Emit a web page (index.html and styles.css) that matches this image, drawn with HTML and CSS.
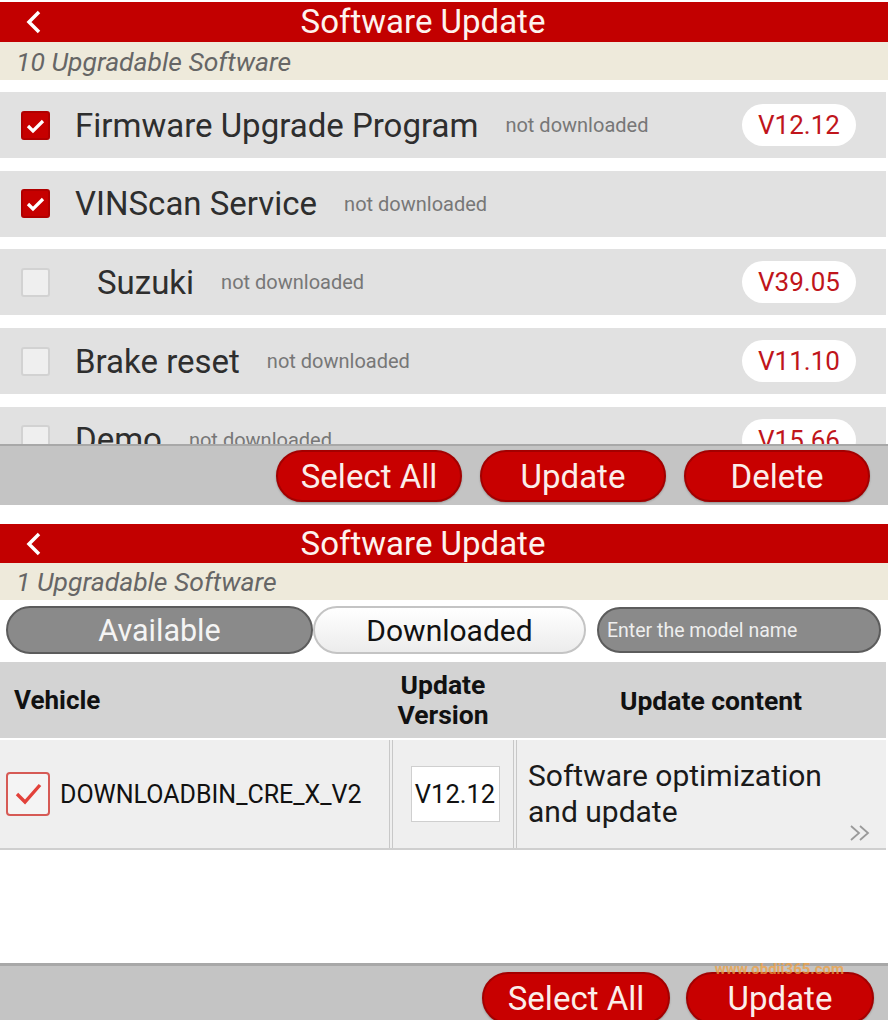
FILE: index.html
```html
<!DOCTYPE html>
<html lang="en">
<head>
  <meta charset="UTF-8">
  <meta name="viewport" content="width=device-width, initial-scale=1.0">
  <title>Software Update</title>
  <link rel="stylesheet" href="styles.css">
</head>
<body>
  <!-- First screen: list of upgradable software -->
  <div class="screen screen-list">
    <header class="titlebar">
      <span class="back">
        <svg width="16" height="24" viewBox="0 0 16 24"><polyline points="13,2 3,12 13,22" fill="none" stroke="#fff" stroke-width="3.5"/></svg>
      </span>
      <h1>Software Update</h1>
    </header>
    <div class="count">10 Upgradable Software</div>

    <div class="list">
      <div class="item">
        <span class="check checked">
          <svg width="29" height="29" viewBox="0 0 29 29"><polyline points="7,15 12,20 22,10" fill="none" stroke="#fff" stroke-width="3.2"/></svg>
        </span>
        <span class="name">Firmware Upgrade Program</span>
        <span class="state">not downloaded</span>
        <span class="version">V12.12</span>
      </div>
      <div class="item">
        <span class="check checked">
          <svg width="29" height="29" viewBox="0 0 29 29"><polyline points="7,15 12,20 22,10" fill="none" stroke="#fff" stroke-width="3.2"/></svg>
        </span>
        <span class="name">VINScan Service</span>
        <span class="state">not downloaded</span>
      </div>
      <div class="item">
        <span class="check"></span>
        <span class="name indent">Suzuki</span>
        <span class="state">not downloaded</span>
        <span class="version">V39.05</span>
      </div>
      <div class="item">
        <span class="check"></span>
        <span class="name">Brake reset</span>
        <span class="state">not downloaded</span>
        <span class="version">V11.10</span>
      </div>
      <div class="item">
        <span class="check"></span>
        <span class="name">Demo</span>
        <span class="state">not downloaded</span>
        <span class="version">V15.66</span>
      </div>
    </div>

    <div class="actions">
      <button class="btn">Select All</button>
      <button class="btn">Update</button>
      <button class="btn">Delete</button>
    </div>
  </div>

  <!-- Second screen: table view -->
  <div class="screen screen-table">
    <header class="titlebar">
      <span class="back">
        <svg width="16" height="24" viewBox="0 0 16 24"><polyline points="13,2 3,12 13,22" fill="none" stroke="#fff" stroke-width="3.5"/></svg>
      </span>
      <h1>Software Update</h1>
    </header>
    <div class="count">1 Upgradable Software</div>

    <div class="tabs">
      <span class="tab active">Available</span>
      <span class="tab">Downloaded</span>
      <span class="search">Enter the model name</span>
    </div>

    <div class="table">
      <div class="thead">
        <div class="th th-vehicle">Vehicle</div>
        <div class="th th-version">Update<br>Version</div>
        <div class="th th-content">Update content</div>
      </div>
      <div class="trow">
        <div class="td td-vehicle">
          <span class="check outline">
            <svg width="40" height="40" viewBox="0 0 40 40"><polyline points="9,20 17,28 32,11" fill="none" stroke="#e2413a" stroke-width="3.4"/></svg>
          </span>
          DOWNLOADBIN_CRE_X_V2
        </div>
        <div class="td td-version"><span class="vbox">V12.12</span></div>
        <div class="td td-content">
          Software optimization<br>and update
          <svg class="more" width="24" height="18" viewBox="0 0 24 18"><polyline points="3,2 11,9 3,16" fill="none" stroke="#9a9a9a" stroke-width="1.8"/><polyline points="12,2 20,9 12,16" fill="none" stroke="#9a9a9a" stroke-width="1.8"/></svg>
        </div>
      </div>
    </div>

    <div class="blank"></div>

    <div class="actions">
      <button class="btn">Select All</button>
      <button class="btn">Update</button>
      <span class="watermark">www.obdii365.com</span>
    </div>
  </div>
</body>
</html>
```

FILE: styles.css
```css
body {
  margin: 0;
  padding: 0;
  width: 888px;
  height: 1020px;
  overflow: hidden;
  background: #fff;
  font-family: Roboto, "Liberation Sans", sans-serif;
}

.screen-list {
  padding-top: 2px;
}

.screen-table {
  margin-top: 19px;
}

/* red title bar */
.titlebar {
  display: flex;
  align-items: center;
  height: 40px;
  background-color: #c20000;
  color: #fff;
  padding-right: 106px;
}

.screen-table .titlebar {
  height: 39px;
}

.back {
  width: 64px;
  display: flex;
  padding-left: 26px;
  box-sizing: border-box;
}

.titlebar h1 {
  flex: 1;
  margin: 0;
  text-align: center;
  font-weight: 400;
  font-size: 33px;
  line-height: 40px;
  color: #fdf3ee;
}

.count {
  height: 38px;
  line-height: 40px;
  background-color: #eeeadb;
  color: #666;
  font-style: italic;
  font-size: 26.5px;
  padding-left: 16px;
}

.screen-table .count {
  height: 37px;
  line-height: 38px;
}

/* list of software */
.list {
  height: 364px;
  overflow: hidden;
  box-sizing: border-box;
  padding: 12px 2px 0 0;
  display: flex;
  flex-direction: column;
  gap: 12.7px;
}

.item {
  flex: none;
  height: 66px;
  display: flex;
  align-items: center;
  background-color: #e1e1e1;
  padding: 0 30px 0 21px;
}

.check {
  flex: none;
  width: 29px;
  height: 29px;
  box-sizing: border-box;
  border: 2px solid #d2d2d2;
  border-radius: 3px;
  background: #efefef;
  display: flex;
}

.check.checked {
  background: #c60000;
  border-color: #b00000;
}

.check.checked svg {
  margin: -2px;
}

.name {
  margin-left: 25px;
  font-size: 33px;
  color: #2e2e2e;
}

.name.indent {
  margin-left: 47px;
}

.state {
  margin-left: 27px;
  font-size: 20px;
  color: #777;
}

.version {
  margin-left: auto;
  width: 114px;
  height: 42px;
  line-height: 42px;
  border-radius: 21px;
  background: #fff;
  color: #c0151b;
  text-align: center;
  font-size: 26px;
}

/* bottom action bar */
.actions {
  position: relative;
  height: 61px;
  box-sizing: border-box;
  background-color: #c4c4c4;
  border-top: 2px solid #a8a8a8;
  display: flex;
  justify-content: flex-end;
  align-items: flex-start;
  gap: 18px;
  padding: 4px 18px 0 0;
}

.btn {
  width: 186px;
  height: 52px;
  border: 2px solid #a30000;
  border-radius: 26px;
  background-color: #c80000;
  color: #fbeeea;
  font-family: Roboto, "Liberation Sans", sans-serif;
  font-size: 33px;
  padding: 0;
  box-shadow: 0 1px 2px rgba(0, 0, 0, 0.25);
}

.screen-table .actions {
  height: 57px;
  border-top-width: 3px;
  padding: 6px 14px 0 0;
  gap: 16px;
}

.screen-table .btn {
  width: 188px;
}

.watermark {
  position: absolute;
  right: 44px;
  top: -6px;
  font-size: 15px;
  font-weight: 700;
  color: #f0a040;
  opacity: 0.75;
}

/* tabs and search */
.tabs {
  height: 60px;
  display: flex;
  align-items: center;
  padding-left: 6px;
}

.tab {
  height: 48px;
  box-sizing: border-box;
  border-radius: 24px;
  display: flex;
  align-items: center;
  justify-content: center;
  font-size: 30px;
}

.tab.active {
  width: 307px;
  background-color: #8a8a8a;
  border: 2px solid #5c5c5c;
  color: #f4f4f4;
  font-size: 30.5px;
}

.tab:not(.active) {
  width: 273px;
  background: linear-gradient(#ffffff, #ececec);
  border: 2px solid #c4c4c4;
  color: #111;
}

.search {
  margin-left: 11px;
  width: 284px;
  height: 46px;
  box-sizing: border-box;
  border-radius: 23px;
  background-color: #8a8a8a;
  border: 2px solid #5c5c5c;
  color: #eee;
  font-size: 19.5px;
  padding-left: 8px;
  display: flex;
  align-items: center;
}

/* table */
.table {
  padding-top: 2px;
  padding-right: 2px;
}

.thead {
  display: grid;
  grid-template-columns: 390px 124px 1fr;
  height: 76px;
  background-color: #d3d3d3;
  align-items: center;
}

.th {
  font-weight: 700;
  font-size: 26.5px;
  color: #111;
}

.th-vehicle {
  padding-left: 14px;
  font-size: 26px;
}

.th-version {
  text-align: center;
  line-height: 30px;
  padding-right: 18px;
}

.th-content {
  text-align: center;
  padding-left: 22px;
}

.trow {
  margin-top: 2px;
  display: grid;
  grid-template-columns: 390px 2px 122px 2px 1fr;
  height: 110px;
  box-sizing: border-box;
  background: #efefef;
  border-bottom: 2px solid #cfcfcf;
}

.td {
  display: flex;
  align-items: center;
}

.td-vehicle {
  padding-left: 6px;
  font-size: 25px;
  color: #111;
  border-right: 1px solid #c8c8c8;
}

.td-version {
  grid-column: 3;
  border-left: 1px solid #c8c8c8;
  border-right: 1px solid #c8c8c8;
  justify-content: center;
  padding-left: 4px;
}

.td-content {
  grid-column: 5;
  position: relative;
  padding-left: 11px;
  font-size: 30px;
  line-height: 36px;
  color: #1a1a1a;
  border-left: 1px solid #c8c8c8;
}

.check.outline {
  width: 44px;
  height: 44px;
  border: 2px solid #d65a55;
  border-radius: 4px;
  background: #f4f4f4;
  margin-right: 10px;
}

.vbox {
  width: 89px;
  height: 56px;
  box-sizing: border-box;
  border: 1px solid #cfcfcf;
  background: #fff;
  display: flex;
  align-items: center;
  justify-content: center;
  font-size: 25.5px;
  color: #111;
}

.more {
  position: absolute;
  right: 14px;
  bottom: 6px;
}

.blank {
  height: 113px;
}
```
